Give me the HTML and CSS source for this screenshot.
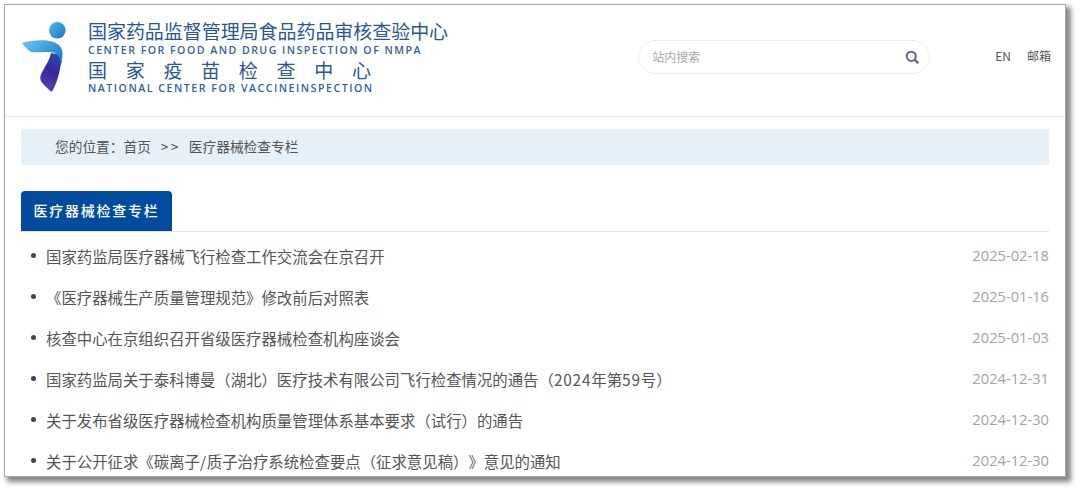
FILE: index.html
```html
<!DOCTYPE html>
<html lang="zh-CN">
<head>
<meta charset="utf-8">
<title>医疗器械检查专栏</title>
<link rel="stylesheet" href="styles.css">
</head>
<body>
<div class="frame">
  <header class="header">
    <div class="brand">
      <svg class="logo" viewBox="0 0 46 72" width="46" height="72" aria-hidden="true">
        <defs>
          <linearGradient id="dot" x1="0" y1="0" x2="1" y2="1"><stop offset="0" stop-color="#5cb8e8"/><stop offset="1" stop-color="#0f76bd"/></linearGradient>
          <linearGradient id="top" x1="0" y1="0" x2="1" y2="0.6"><stop offset="0" stop-color="#6cc6ee"/><stop offset="1" stop-color="#1f86cc"/></linearGradient>
          <linearGradient id="low" x1="0.7" y1="0" x2="0.4" y2="1"><stop offset="0" stop-color="#2b4aa6"/><stop offset="0.45" stop-color="#37289a"/><stop offset="1" stop-color="#4f46aa"/></linearGradient>
        </defs>
        <circle cx="35.3" cy="9.3" r="8.3" fill="url(#dot)"/>
        <path d="M29 32 C27 41 21 48 18.5 55 C17.5 59 20 62 23 65 C25.5 67.5 28 70 30 70.8 C33 66 36 58 38 48 C39.2 42 39.8 38 39.6 34Z" fill="url(#low)"/>
        <path d="M0 21.7 C8 19.5 22 18.3 30 20.5 C37 22.5 40.5 26.5 40.5 33 C40.5 36 40 40 39.3 43 C38.5 37 35.5 32.5 30 31.3 C24 30.2 15 31.8 9 31 C5.5 28.8 2.5 25.5 0 21.7Z" fill="url(#top)"/>
      </svg>
      <div class="brand-text">
        <div class="cn-main">国家药品监督管理局食品药品审核查验中心</div>
        <div class="en-main">CENTER FOR FOOD AND DRUG INSPECTION OF NMPA</div>
        <div class="cn-sub">国家疫苗检查中心</div>
        <div class="en-sub">NATIONAL CENTER FOR VACCINEINSPECTION</div>
      </div>
    </div>
    <div class="tools">
      <div class="search">
        <span class="placeholder">站内搜索</span>
        <svg class="search-icon" viewBox="0 0 14 14" width="14" height="14" aria-hidden="true">
          <circle cx="6.3" cy="6.3" r="4.6" fill="none" stroke="#5c6784" stroke-width="2"/>
          <path d="M9.8 9.8 L12.6 12.6" stroke="#5c6784" stroke-width="2.2" stroke-linecap="round"/>
        </svg>
      </div>
      <nav class="links"><a>EN</a><a>邮箱</a></nav>
    </div>
  </header>
  <main class="content">
    <div class="crumb">您的位置&#xFF1A;<span class="crumb-home">首页</span><span class="crumb-sep">&gt;&gt;</span>医疗器械检查专栏</div>
    <div class="tabs"><div class="tab">医疗器械检查专栏</div></div>
    <ul class="list">
      <li><span class="title">国家药监局医疗器械飞行检查工作交流会在京召开</span><span class="date">2025-02-18</span></li>
      <li><span class="title">《医疗器械生产质量管理规范》修改前后对照表</span><span class="date">2025-01-16</span></li>
      <li><span class="title">核查中心在京组织召开省级医疗器械检查机构座谈会</span><span class="date">2025-01-03</span></li>
      <li><span class="title">国家药监局关于泰科博曼&#xFF08;湖北&#xFF09;医疗技术有限公司飞行检查情况的通告&#xFF08;<span class="num">2024</span>年第<span class="num">59</span>号&#xFF09;</span><span class="date">2024-12-31</span></li>
      <li><span class="title">关于发布省级医疗器械检查机构质量管理体系基本要求&#xFF08;试行&#xFF09;的通告</span><span class="date">2024-12-30</span></li>
      <li><span class="title">关于公开征求《碳离子<span class="num">/</span>质子治疗系统检查要点&#xFF08;征求意见稿&#xFF09;》意见的通知</span><span class="date">2024-12-30</span></li>
    </ul>
  </main>
</div>
</body>
</html>
```
FILE: styles.css
```css
html, body { margin: 0; padding: 0; background: #fff; }
body {
  width: 1080px;
  height: 492px;
  overflow: hidden;
  font-family: "Noto Sans CJK SC", "Open Sans", sans-serif;
}
.frame {
  box-sizing: border-box;
  width: 1062px;
  height: 473px;
  margin: 4px 0 0 4px;
  border: 1px solid #a8a8a8;
  background: #fff;
  box-shadow: 4px 4px 5px 1px #858585;
  overflow: hidden;
}
.header {
  box-sizing: border-box;
  height: 112px;
  border-bottom: 1px solid #ededed;
  display: flex;
  align-items: flex-start;
  justify-content: space-between;
}
.brand {
  display: flex;
  padding: 16px 0 0 17px;
}
.logo { display: block; flex: none; }
.brand-text {
  margin-left: 20px;
  white-space: nowrap;
}
.cn-main {
  font-size: 19px;
  line-height: 22px;
  height: 22px;
  font-weight: 400;
  margin-top: -1px;
  color: #2a5596;
  letter-spacing: -0.05px;
}
.en-main, .en-sub {
  font-family: "Open Sans", sans-serif;
  font-weight: 600;
  font-size: 10.6px;
  height: 14px;
  line-height: 14px;
  letter-spacing: 1.47px;
  color: #32609f;
}
.en-main { margin-top: 1px; }
.cn-sub {
  font-size: 19px;
  line-height: 22px;
  height: 22px;
  font-weight: 400;
  letter-spacing: 18.7px;
  margin-top: 2px;
  color: #2a5596;
}
.en-sub { letter-spacing: 1.52px; margin-top: 0; }
.tools {
  display: flex;
  align-items: center;
  padding-top: 35px;
  padding-right: 14px;
}
.search {
  box-sizing: border-box;
  width: 292px;
  height: 34px;
  border: 1px solid #ececf0;
  border-radius: 17px;
  display: flex;
  align-items: center;
  justify-content: space-between;
  padding: 0 10px 0 13px;
}
.placeholder { font-size: 12px; line-height: 16px; height: 17px; color: #a9a9a9; }
.search-icon { display: block; }
.links {
  display: flex;
  gap: 16px;
  margin-left: 65px;
  font-size: 12px;
  line-height: 16px;
  padding-bottom: 2px;
  color: #555;
}
.content { padding: 12px 16px 0 16px; }
.crumb {
  height: 36px;
  line-height: 34px;
  background: #e6f0f9;
  padding-left: 34px;
  font-size: 13.7px;
  color: #555;
  white-space: nowrap;
}
.crumb-sep { margin: 0 8px 0 10px; letter-spacing: 2.4px; }
.tabs {
  margin-top: 26px;
  border-bottom: 1px solid #e2e2e2;
  display: flex;
}
.tab {
  box-sizing: border-box;
  width: 151px;
  height: 40px;
  line-height: 38px;
  background: #004b9d;
  color: #fff;
  border-radius: 4px 4px 0 0;
  text-align: center;
  font-size: 14px;
  letter-spacing: 1.75px;
  font-weight: 500;
}
.list { list-style: none; margin: 3px 0 0; padding: 0; }
.list li {
  height: 41px;
  display: flex;
  align-items: center;
  justify-content: space-between;
}
.title {
  position: relative;
  padding-left: 25px;
  font-size: 15.4px;
  color: #555;
  white-space: nowrap;
  text-spacing-trim: space-all;
}
.num { letter-spacing: 0.8px; }
.title::before {
  content: "";
  position: absolute;
  left: 10px;
  top: 50%;
  width: 5px;
  height: 5px;
  margin-top: -3px;
  border-radius: 50%;
  background: #444;
}
.date {
  font-family: "Open Sans", sans-serif;
  font-size: 14.7px;
  color: #a3a3a3;
  padding-bottom: 2px;
}
```
